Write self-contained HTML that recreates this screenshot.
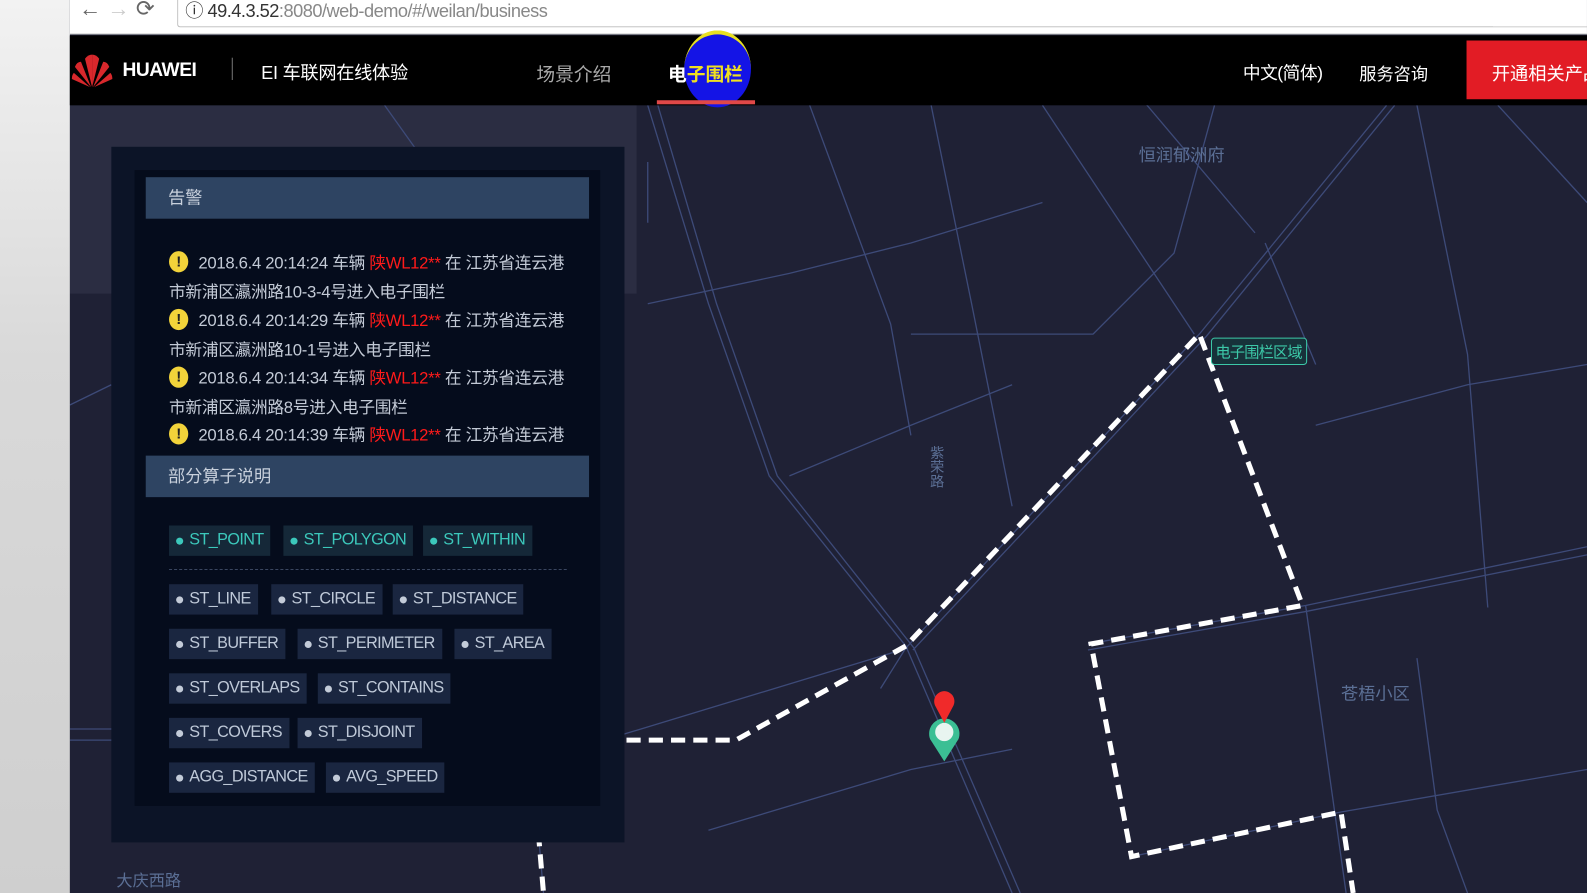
<!DOCTYPE html>
<html><head><meta charset="utf-8">
<style>
*{margin:0;padding:0;box-sizing:border-box}
html,body{width:1587px;height:893px;overflow:hidden;background:#1f2135}
#w{position:absolute;left:0;top:0;width:1568px;height:882px;transform:scale(1.0121,1.0125);transform-origin:0 0;font-family:"Liberation Sans","Noto Sans CJK SC",sans-serif}
.abs{position:absolute}
.tag{position:absolute;height:30px;line-height:30px;background:#1a2640;color:#bfc9d8;font-size:16px;padding:0 7px 0 20px;letter-spacing:-0.6px}
.tag:before{content:"";position:absolute;left:7px;top:12px;width:7px;height:7px;border-radius:50%;background:#c3cbd8}
.tag.t{color:#3cc8bb;background:#152838}
.tag.t:before{background:#3cc8bb}
.al{position:absolute;left:167px;font-size:16.5px;color:#c3cad6;white-space:nowrap;letter-spacing:-0.3px}
.al b{font-weight:normal;color:#ff1a1a}
.ic{display:inline-block;width:19px;height:21px;border-radius:50%;background:#f2d33a;color:#222;font-weight:bold;font-size:15px;text-align:center;line-height:21px;margin-right:10px;vertical-align:2px}
</style></head><body><div id="w">
<svg class="abs" style="left:0;top:0" width="1568" height="882">
<rect x="69" y="104" width="1499" height="778" fill="#1f2135"/>
<rect x="69" y="104" width="560" height="186" fill="#2e3146" opacity="0.8"/>
<g stroke="#3d4a78" stroke-width="1.3" fill="none">
<path d="M1370 104 L1185 330 L895 640 L870 680"/>
<path d="M1378 104 L1192 332 L902 642"/>
<path d="M1030 104 L1180 330"/>
<path d="M640 104 L700 300 L760 470 L895 638 L1000 882"/>
<path d="M650 104 L708 300 L768 470 L903 640 L1008 882"/>
<path d="M1075 636 L1290 598 L1568 540"/>
<path d="M1075 642 L1290 604 L1568 548"/>
<path d="M1118 846 L1325 802 L1568 760"/>
<path d="M897 640 L597 731 L69 731"/>
<path d="M69 720 L600 720"/>
<path d="M920 104 L960 300 L1000 500"/>
<path d="M800 104 L880 320 L900 430"/>
<path d="M1290 598 L1330 882"/>
<path d="M1400 104 L1450 350 L1470 600"/>
<path d="M1200 104 L1160 250 L1080 330 L900 330"/>
<path d="M1480 104 L1568 200"/>
<path d="M640 300 L780 270 L900 240 L1030 200"/>
<path d="M780 470 L900 420 L1000 380"/>
<path d="M700 820 L900 760 L1000 740"/>
<path d="M1300 420 L1450 380 L1568 360"/>
<path d="M1400 650 L1420 800 L1450 882"/>
<path d="M69 400 L110 380"/>
<path d="M380 104 L420 160"/>
<path d="M640 160 L640 220"/>
<path d="M530 800 L537 882"/>
<path d="M1250 240 L1300 360"/>
<path d="M1130 100 L1240 230"/>
</g>
<g fill="none" stroke="#fff" stroke-width="5" stroke-dasharray="14 8">
<path d="M597 731 L727 731 L895 638 L1185 330 L1287 598 L1078 636 L1118 846 L1325 802 L1337 882"/>
<path d="M530 800 L537 882"/>
</g>
<text x="1125" y="159" fill="#5b6f95" font-size="17" font-family="Liberation Sans,Noto Sans CJK SC,sans-serif">恒润郁洲府</text>
<text x="1325" y="691" fill="#5b6f95" font-size="17" font-family="Liberation Sans,Noto Sans CJK SC,sans-serif">苍梧小区</text>
<text x="115" y="875" fill="#5b6f95" font-size="16" font-family="Liberation Sans,Noto Sans CJK SC,sans-serif">大庆西路</text>
<text x="925" y="440" fill="#5b6f95" font-size="14" font-family="Liberation Sans,Noto Sans CJK SC,sans-serif" writing-mode="tb">紫荣路</text>
<rect x="1197" y="334" width="94" height="26" rx="3" fill="#17323a" stroke="#3cc8a8"/>
<text x="1201" y="353" fill="#3cc8a8" font-size="15" font-family="Liberation Sans,Noto Sans CJK SC,sans-serif" textLength="86">电子围栏区域</text>
<path d="M933 752 L919 730 A15 15 0 1 1 947 730 Z" fill="#3bbf94"/>
<circle cx="933" cy="723" r="9" fill="#e8f5f0"/>
<path d="M933 714 L924 697 A10 10 0 1 1 942 697 Z" fill="#f02a2a"/>
</svg>
<div class="abs" style="left:0;top:0;width:69px;height:882px;background:linear-gradient(#f2f2f2,#d9d9d9 40%,#cfcfcf)"></div>
<div class="abs" style="left:69px;top:0;width:1499px;height:34px;background:#fff;border-bottom:1px solid #ccc"></div>
<div class="abs" style="left:78px;top:-4px;font-size:22px;color:#666">←&nbsp;<span style="color:#ccc">→</span>&nbsp;⟳</div>
<div class="abs" style="left:175px;top:-6px;width:1400px;height:33px;border:1px solid #bbb;border-top:none;border-radius:0 0 0 3px"></div>
<div class="abs" style="left:183px;top:-3px;font-size:18px;color:#333;letter-spacing:-0.5px">ⓘ 49.4.3.52<span style="color:#888">:8080/web-demo/#/weilan/business</span></div>
<div class="abs" style="left:69px;top:35px;width:1499px;height:69px;background:#000"></div>
<svg class="abs" style="left:70px;top:52px" width="42" height="36" viewBox="0 0 42 36">
<g fill="#d8282c"><path d="M21 34 L14 6 Q17 2 21 2 Z"/><path d="M21 34 L28 6 Q25 2 21 2 Z"/><path d="M20 34 L4 14 Q6 9 10 9 Z"/><path d="M22 34 L38 14 Q36 9 32 9 Z"/><path d="M19 34 L1 26 Q1 22 3 20 Z"/><path d="M23 34 L41 26 Q41 22 39 20 Z"/></g></svg>
<div class="abs" style="left:121px;top:59px;font-size:19px;font-weight:bold;color:#fff;letter-spacing:-0.5px">HUAWEI</div>
<div class="abs" style="left:229px;top:57px;width:1px;height:22px;background:#777"></div>
<div class="abs" style="left:258px;top:58px;font-size:18px;color:#fff;letter-spacing:-0.3px">EI 车联网在线体验</div>
<div class="abs" style="left:530px;top:60px;font-size:18.5px;color:#aaa">场景介绍</div>
<div class="abs" style="left:676px;top:30px;width:66px;height:76px;border-radius:50%;background:#1414e6;border-top:4px solid #e8e020"></div>
<div class="abs" style="left:660px;top:60px;font-size:18.5px;color:#fff;font-weight:bold">电<span style="color:#f0e020">子围栏</span></div>
<div class="abs" style="left:649px;top:99px;width:97px;height:4px;background:#e04848"></div>
<div class="abs" style="left:1228px;top:59px;font-size:17.5px;color:#fff;letter-spacing:-0.5px">中文(简体)</div>
<div class="abs" style="left:1343px;top:59px;font-size:17px;color:#fff">服务咨询</div>
<div class="abs" style="left:1449px;top:40px;width:119px;height:58px;background:#e21c25"></div>
<div class="abs" style="left:1474px;top:59px;font-size:18px;color:#fff;white-space:nowrap">开通相关产品</div>
<div class="abs" style="left:110px;top:145px;width:507px;height:687px;background:#0c1427"></div>
<div class="abs" style="left:133px;top:168px;width:460px;height:628px;background:#050c1c"></div>
<div class="abs" style="left:144px;top:175px;width:438px;height:41px;background:#2e4462;color:#c8d0dc;font-size:17px;line-height:41px;padding-left:22px">告警</div>
<div class="al" style="top:246px"><span class="ic">!</span>2018.6.4 20:14:24 车辆 <b>陕WL12**</b> 在 江苏省连云港</div>
<div class="al" style="top:275px">市新浦区瀛洲路10-3-4号进入电子围栏</div>
<div class="al" style="top:303px"><span class="ic">!</span>2018.6.4 20:14:29 车辆 <b>陕WL12**</b> 在 江苏省连云港</div>
<div class="al" style="top:332px">市新浦区瀛洲路10-1号进入电子围栏</div>
<div class="al" style="top:360px"><span class="ic">!</span>2018.6.4 20:14:34 车辆 <b>陕WL12**</b> 在 江苏省连云港</div>
<div class="al" style="top:389px">市新浦区瀛洲路8号进入电子围栏</div>
<div class="al" style="top:416px"><span class="ic">!</span>2018.6.4 20:14:39 车辆 <b>陕WL12**</b> 在 江苏省连云港</div>
<div class="abs" style="left:144px;top:450px;width:438px;height:41px;background:#2e4462;color:#c8d0dc;font-size:17px;line-height:41px;padding-left:22px">部分算子说明</div>
<div class="tag t" style="left:167px;top:519px">ST_POINT</div>
<div class="tag t" style="left:280px;top:519px">ST_POLYGON</div>
<div class="tag t" style="left:418px;top:519px">ST_WITHIN</div>
<div class="abs" style="left:167px;top:562px;width:393px;border-top:1px dashed #3a4660"></div>
<div class="tag" style="left:167px;top:577px">ST_LINE</div>
<div class="tag" style="left:268px;top:577px">ST_CIRCLE</div>
<div class="tag" style="left:388px;top:577px">ST_DISTANCE</div>
<div class="tag" style="left:167px;top:621px">ST_BUFFER</div>
<div class="tag" style="left:294px;top:621px">ST_PERIMETER</div>
<div class="tag" style="left:449px;top:621px">ST_AREA</div>
<div class="tag" style="left:167px;top:665px">ST_OVERLAPS</div>
<div class="tag" style="left:314px;top:665px">ST_CONTAINS</div>
<div class="tag" style="left:167px;top:709px">ST_COVERS</div>
<div class="tag" style="left:294px;top:709px">ST_DISJOINT</div>
<div class="tag" style="left:167px;top:753px">AGG_DISTANCE</div>
<div class="tag" style="left:322px;top:753px">AVG_SPEED</div>
</div></body></html>
